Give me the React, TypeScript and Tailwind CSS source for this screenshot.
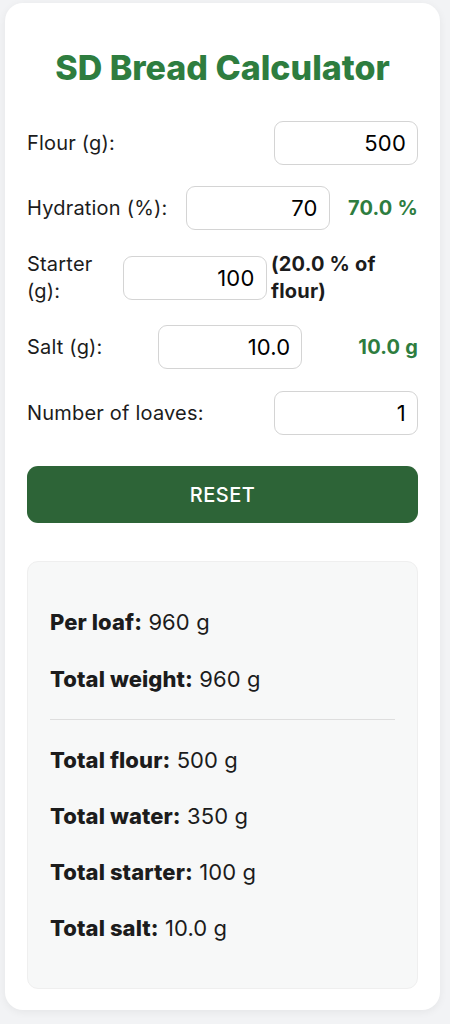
import React, { useState } from "react";

const Row: React.FC<{ children: React.ReactNode; className?: string }> = ({ children, className }) => (
  <div className={`flex items-center justify-between ${className ?? ""}`}>{children}</div>
);

const NumInput: React.FC<{ value: string; onChange: (v: string) => void }> = ({ value, onChange }) => (
  <input
    type="text"
    value={value}
    onChange={(e) => onChange(e.target.value)}
    className="w-[144px] h-[44px] shrink-0 rounded-[9px] border border-[#d4d4d4] bg-white px-[11px] text-right text-[22px] text-black outline-none"
  />
);

export default function App() {
  const [flour, setFlour] = useState("500");
  const [hydration, setHydration] = useState("70");
  const [starter, setStarter] = useState("100");
  const [salt, setSalt] = useState("10.0");
  const [loaves, setLoaves] = useState("1");

  const f = parseFloat(flour) || 0;
  const water = Math.round((f * (parseFloat(hydration) || 0)) / 100);
  const st = parseFloat(starter) || 0;
  const sa = parseFloat(salt) || 0;
  const n = parseInt(loaves) || 1;
  const total = f + water + st + sa;

  const reset = () => {
    setFlour("500");
    setHydration("70");
    setStarter("100");
    setSalt("10.0");
    setLoaves("1");
  };

  return (
    <div className="min-h-screen bg-[#f2f3f5] px-[5px] pt-[3px] pb-[12px]" style={{ fontFamily: "Inter, 'Noto Sans', sans-serif" }}>
      <div className="rounded-[18px] bg-white px-[22px] pt-[46px] pb-[21px] shadow-[0_2px_8px_rgba(0,0,0,0.06)] w-[435px]">
        <h1 className="text-center text-[34px] font-extrabold leading-[38px] text-[#2e7d3f]">SD Bread Calculator</h1>

        <div className="mt-[34px] flex flex-col text-[20px] tracking-[0.2px] text-[#1c1c1c]">
          <Row className="h-[44px]">
            <span>Flour (g):</span>
            <NumInput value={flour} onChange={setFlour} />
          </Row>
          <Row className="mt-[21px] h-[44px]">
            <span>Hydration (%):</span>
            <NumInput value={hydration} onChange={setHydration} />
            <span className="font-bold text-[#2e7d3f]">{(parseFloat(hydration) || 0).toFixed(1)} %</span>
          </Row>
          <Row className="mt-[25px] h-[45px]">
            <span className="w-[94px] leading-[27px]">Starter (g):</span>
            <NumInput value={starter} onChange={setStarter} />
            <span className="w-[150px] pl-[3px] font-bold leading-[27px] text-[#1c1c1c]">
              ({f ? ((st / f) * 100).toFixed(1) : "0.0"} % of flour)
            </span>
          </Row>
          <Row className="mt-[25px] h-[44px]">
            <span>Salt (g):</span>
            <NumInput value={salt} onChange={setSalt} />
            <span className="font-bold text-[#2e7d3f]">{sa.toFixed(1)} g</span>
          </Row>
          <Row className="mt-[22px] h-[44px]">
            <span>Number of loaves:</span>
            <NumInput value={loaves} onChange={setLoaves} />
          </Row>
        </div>

        <button
          onClick={reset}
          className="mt-[31px] h-[57px] w-full rounded-[11px] bg-[#2d6437] text-[20px] font-medium tracking-wide text-white"
        >
          RESET
        </button>

        <div className="mt-[38px] rounded-[11px] border border-[#efefef] bg-[#f7f8f8] px-[22px] py-[46px] text-[22px] tracking-[0.1px] text-[#1c1c1c]">
          <div className="flex flex-col gap-[29px] leading-[28px]">
            <p><b className="font-extrabold">Per loaf:</b> {Math.round(total / n)} g</p>
            <p><b className="font-extrabold">Total weight:</b> {Math.round(total)} g</p>
          </div>
          <hr className="my-[26px] border-t border-[#dedede]" />
          <div className="flex flex-col gap-[28px] leading-[28px]">
            <p><b className="font-extrabold">Total flour:</b> {f} g</p>
            <p><b className="font-extrabold">Total water:</b> {water} g</p>
            <p><b className="font-extrabold">Total starter:</b> {st} g</p>
            <p><b className="font-extrabold">Total salt:</b> {sa.toFixed(1)} g</p>
          </div>
        </div>
      </div>
    </div>
  );
}
